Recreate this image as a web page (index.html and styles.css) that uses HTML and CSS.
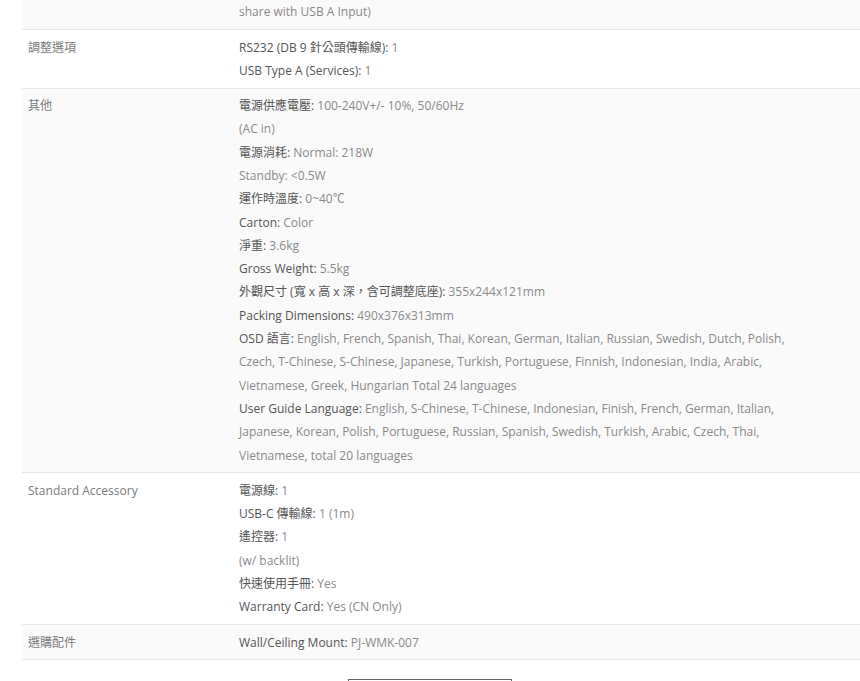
FILE: index.html
```html
<!DOCTYPE html>
<html lang="zh-Hant">
<head>
	<meta charset="UTF-8">
	<title>規格</title>
	<link rel="stylesheet" href="styles.css">
</head>
<body>

<div class="spec">
	<div class="spec-row odd first">
		<div class="spec-name"></div>
		<div class="spec-value">
			<p>share with USB A Input)</p>
		</div>
	</div>
	<div class="spec-row">
		<div class="spec-name">調整選項</div>
		<div class="spec-value">
			<p><b>RS232 (DB 9 針公頭傳輸線):</b> 1</p>
			<p><b>USB Type A (Services):</b> 1</p>
		</div>
	</div>
	<div class="spec-row odd">
		<div class="spec-name">其他</div>
		<div class="spec-value">
			<p><b>電源供應電壓:</b> 100-240V+/- 10%, 50/60Hz</p>
			<p>(AC in)</p>
			<p><b>電源消耗:</b> Normal: 218W</p>
			<p>Standby: &lt;0.5W</p>
			<p><b>運作時溫度:</b> 0~40℃</p>
			<p><b>Carton:</b> Color</p>
			<p><b>淨重:</b> 3.6kg</p>
			<p><b>Gross Weight:</b> 5.5kg</p>
			<p><b>外觀尺寸 (寬 x 高 x 深，含可調整底座):</b> 355x244x121mm</p>
			<p><b>Packing Dimensions:</b> 490x376x313mm</p>
			<p><b>OSD 語言:</b> English, French, Spanish, Thai, Korean, German, Italian, Russian, Swedish, Dutch, Polish, Czech, T-Chinese, S-Chinese, Japanese, Turkish, Portuguese, Finnish, Indonesian, India, Arabic, Vietnamese, Greek, Hungarian Total 24 languages</p>
			<p><b>User Guide Language:</b> English, S-Chinese, T-Chinese, Indonesian, Finish, French, German, Italian, Japanese, Korean, Polish, Portuguese, Russian, Spanish, Swedish, Turkish, Arabic, Czech, Thai, Vietnamese, total 20 languages</p>
		</div>
	</div>
	<div class="spec-row">
		<div class="spec-name">Standard Accessory</div>
		<div class="spec-value">
			<p><b>電源線:</b> 1</p>
			<p><b>USB-C 傳輸線:</b> 1 (1m)</p>
			<p><b>遙控器:</b> 1</p>
			<p>(w/ backlit)</p>
			<p><b>快速使用手冊:</b> Yes</p>
			<p><b>Warranty Card:</b> Yes (CN Only)</p>
		</div>
	</div>
	<div class="spec-row odd">
		<div class="spec-name">選購配件</div>
		<div class="spec-value">
			<p><b>Wall/Ceiling Mount:</b> PJ-WMK-007</p>
		</div>
	</div>
</div>

<div class="back">
	<a href="#" class="back-btn"></a>
</div>

</body>
</html>
```

FILE: styles.css
```css
*{margin: 0;padding: 0;}
html,body{overflow: hidden;}
body{
	background: #fff;
	font-family: "Open Sans", "Noto Sans CJK TC", sans-serif;
	font-size: 12px;
	color: #8a8a8a;
}
/*規格表*/
.spec{
	margin-left: 22px;
}
.spec-row{
	display: grid;
	grid-template-columns: 217px 1fr;
	padding: 5.5px 0;
	border-bottom: 1px solid #e6e6e6;
	line-height: 23.3px;
}
.spec-row.odd{
	background-color: #fafafa;
}
.spec-row.first{
	padding-top: 0;
	padding-bottom: 6px;
	line-height: 23px;
}
.spec-name{
	padding-left: 6px;
	color: #7a7a7a;
}
.spec-value{
	max-width: 565px;
}
.spec-value b{
	font-weight: normal;
	color: #555;
}
/*返回按鈕*/
.back{
	padding-top: 19px;
	text-align: center;
}
.back-btn{
	display: inline-block;
	width: 162px;
	height: 36px;
	border: 1px solid #666;
	vertical-align: top;
}
```
